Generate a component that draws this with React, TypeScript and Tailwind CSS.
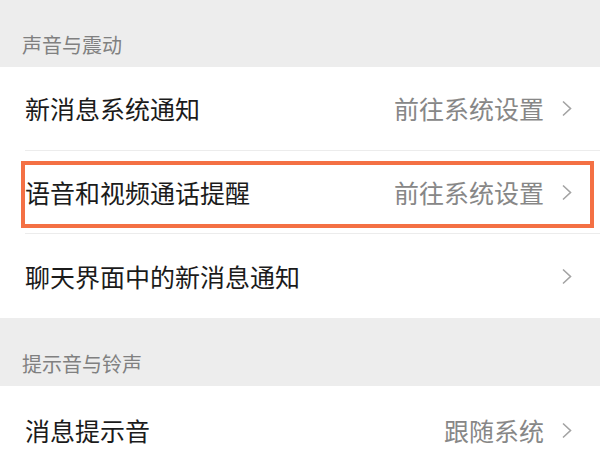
import React from "react";

const Chevron = () => (
  <svg width="12" height="17" viewBox="0 0 12 17" className="ml-[17px] shrink-0">
    <polyline points="2,1.5 9.5,8.5 2,15.5" fill="none" stroke="#a3a3a3" strokeWidth="1.6" strokeLinejoin="miter" />
  </svg>
);

const Header = ({ text, h }: { text: string; h: string }) => (
  <div className={`${h} bg-[#ededed] flex items-end pl-[22px] pb-[12px]`}>
    <span className="text-[20px] leading-[20px] text-[#808080]">{text}</span>
  </div>
);

const Row = ({
  title,
  value,
  h,
  divider = true,
  children,
}: {
  title: string;
  value?: string;
  h: string;
  divider?: boolean;
  children?: React.ReactNode;
}) => (
  <div className={`relative bg-white ${h} pl-[25px]`}>
    <div
      className={`h-full flex items-center pr-[27px] ${divider ? "border-b border-[#ececec]" : ""}`}
    >
      <span className="flex-1 text-[25px] leading-[25px] text-[#1b1b1b]">{title}</span>
      {value && <span className="text-[25px] leading-[25px] text-[#878787]">{value}</span>}
      <Chevron />
    </div>
    {children}
  </div>
);

export default function App() {
  return (
    <div
      className="w-[600px] h-[450px] overflow-hidden bg-[#ededed]"
      style={{ fontFamily: '"Noto Sans CJK SC", "Noto Sans", sans-serif' }}
    >
      <Header text="声音与震动" h="h-[67px]" />
      <Row title="新消息系统通知" value="前往系统设置" h="h-[84px]" />
      <Row title="语音和视频通话提醒" value="前往系统设置" h="h-[83px]">
        <div className="absolute left-[21px] top-[10px] w-[573px] h-[67px] border-[4px] border-[#f47044]" />
      </Row>
      <Row title="聊天界面中的新消息通知" h="h-[84px]" divider={false} />
      <Header text="提示音与铃声" h="h-[68px]" />
      <Row title="消息提示音" value="跟随系统" h="h-[88px]" divider={false} />
    </div>
  );
}
